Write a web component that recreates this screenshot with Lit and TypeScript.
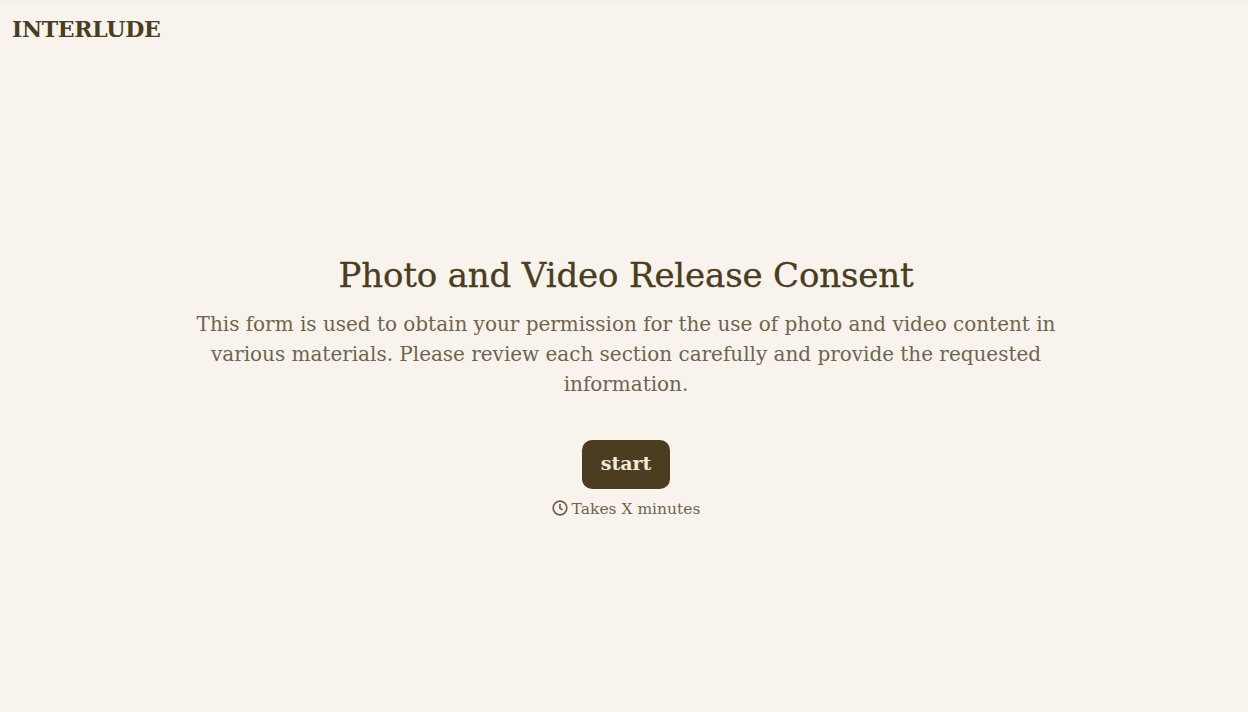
import { LitElement, html, css } from "lit";
import { customElement } from "lit/decorators.js";

@customElement("app-root")
export class AppRoot extends LitElement {
  static styles = css`
    :host { display: block; }
    .page { height: 712px; box-sizing: border-box; background: #f8f4ed; border-top: 3px solid #f2f1ed; display: flex; flex-direction: column; font-family: "DejaVu Serif", serif; color: #4a3d20; }
    .logo { font-size: 22px; font-weight: 700; padding: 10px 12px; line-height: 32px; letter-spacing: -0.3px; }
    .main { flex: 1; display: flex; flex-direction: column; align-items: center; padding: 196px 0 0 4px; }
    h1 { margin: 0; font-size: 34px; font-weight: 400; line-height: 48px; letter-spacing: -0.15px; -webkit-text-stroke: 0.3px #4a3d20; }
    p { margin: 10px 0 0; width: 880px; text-align: center; font-size: 20px; line-height: 30px; color: #6f644c; letter-spacing: -0.02px; }
    button { margin-top: 41px; border: none; background: #4a3d20; color: #efe9da; border-radius: 10px; width: 88px; height: 49px; font: 700 19px "DejaVu Serif", serif; padding: 0 0 3px; }
    .time { margin-top: 10px; display: flex; align-items: center; gap: 4px; font-size: 15.5px; line-height: 20px; color: #6f644c; }
    svg { display: block; margin-top: -2px; }
  `;
  render() {
    return html`<div class="page">
      <div class="logo">INTERLUDE</div>
      <div class="main">
        <h1>Photo and Video Release Consent</h1>
        <p>This form is used to obtain your permission for the use of photo and video content in various materials. Please review each section carefully and provide the requested information.</p>
        <button>start</button>
        <div class="time">
          <svg width="16" height="16" viewBox="0 0 16 16" fill="none" stroke="currentColor" stroke-width="1.7"><circle cx="8" cy="8" r="6.8"/><path d="M8 4v4.3l2.6 1.6"/></svg>
          Takes X minutes
        </div>
      </div>
    </div>`;
  }
}
